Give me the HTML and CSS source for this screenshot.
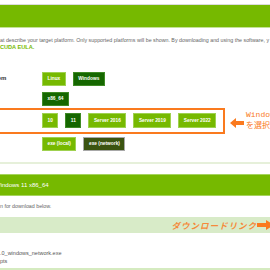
FILE: index.html
```html
<!DOCTYPE html>
<html lang="ja">
<head>
    <meta charset="utf-8">
    <title>CUDA Toolkit Downloads</title>
    <link rel="stylesheet" href="styles.css">
</head>
<body>
    <div class="header"></div>

    <div class="intro">
        <p>at describe your target platform. Only supported platforms will be shown. By downloading and using the software, y</p>
        <p><a href="#" class="eula">CUDA EULA.</a></p>
    </div>

    <div class="platform">
        <div class="row">
            <div class="label">Operating System</div>
            <a href="#" class="btn">Linux</a>
            <a href="#" class="btn active">Windows</a>
        </div>
        <div class="row">
            <div class="label"></div>
            <a href="#" class="btn active">x86_64</a>
        </div>
        <div class="row boxed">
            <div class="label"></div>
            <a href="#" class="btn">10</a>
            <a href="#" class="btn active">11</a>
            <a href="#" class="btn">Server 2016</a>
            <a href="#" class="btn">Server 2019</a>
            <a href="#" class="btn">Server 2022</a>
        </div>
        <div class="row">
            <div class="label"></div>
            <a href="#" class="btn">exe (local)</a>
            <a href="#" class="btn selected">exe (network)</a>
        </div>

        <!-- annotation -->
        <svg class="note-arrow" width="14" height="10" viewBox="0 0 14 10">
            <polygon points="0,5 6,0 6,3 14,3 14,7 6,7 6,10" fill="#fa7a1e"/>
        </svg>
        <div class="note">Windows<br>を選択</div>
    </div>

    <div class="divider"></div>

    <div class="result-bar"><span>Windows 11 x86_64</span></div>

    <p class="note-line">n for download below.</p>

    <div class="band">
        <span class="band-text">ダウンロードリンク</span>
        <svg class="band-arrow" width="17" height="10" viewBox="0 0 17 10">
            <polygon points="0,3 9,3 9,0 17,5 9,10 9,7 0,7" fill="#fa7a1e"/>
        </svg>
    </div>

    <div class="file">
        <p>.0_windows_network.exe</p>
        <p>pts</p>
    </div>

    <div class="bottom-line"></div>
</body>
</html>
```

FILE: styles.css
```css
/* Base */
body {margin: 0; overflow: hidden; font-family: "Liberation Sans", Arial, sans-serif; background: #fff; color: #666;}
p {margin: 0}
a {text-decoration: none}

/* Header */
.header {margin-top: 4px; height: 22px; background: #76b900; border-top: 1px solid #dcdcdc; border-bottom: 1px solid #c4e296;}

/* Intro text */
.intro {margin-top: 9px; font-size: 5.3px; line-height: 7px; white-space: nowrap;}
.eula {color: #76b900; font-weight: bold; font-size: 5.6px;}

/* Platform selector */
.platform {position: relative; margin-top: 21px;}
.row {display: flex; gap: 7px; height: 14px; margin-left: -45px; margin-top: 6px;}
.row:first-child {margin-top: 0}
.label {width: 80px; flex: none; font-size: 6px; font-weight: bold; color: #333; line-height: 12px; white-space: nowrap;}
.btn {display: block; height: 14px; line-height: 12px; padding: 0 4.5px; box-sizing: border-box; background: #76b900; border: 1px solid #9fd150; color: #fff; font-size: 4.8px; font-weight: bold; white-space: nowrap;}
.btn.active {background: #156700; border-color: #3f8a26;}
.btn.selected {background: #3b5411; border: 1px solid #a8a8a8;}

.row.boxed {margin-top: 2px; height: auto; padding: 3px 0 4px 0; border: 2px solid #fa7a1e; width: 272px; box-sizing: border-box; margin-left: -47px;}
.row.boxed .btn {height: 15px; line-height: 13px;}
.row.boxed + .row {margin-top: 3px}

/* Annotation */
.note-arrow {position: absolute; left: 230px; top: 46px;}
.note {position: absolute; left: 246px; top: 37px; color: #fa7a1e; font-family: "Liberation Mono", "Noto Sans CJK JP", monospace; font-size: 8px; line-height: 11px; white-space: nowrap;}

/* Result */
.divider {margin-top: 11px; height: 2px; background: #e6f0da;}
.result-bar {margin-top: 10px; height: 22px; background: #76b900; border-top: 1px solid #a6d45e; border-bottom: 1px solid #a6d45e; box-sizing: border-box; display: flex; align-items: center;}
.result-bar span {margin-left: -5px; color: #fff; font-size: 6px; white-space: nowrap;}

.note-line {margin-top: 6px; font-size: 5.3px; line-height: 8px; white-space: nowrap;}

.band {margin-top: 7px; height: 16px; background: #d8ebc8; display: flex; align-items: center; justify-content: flex-end; overflow: hidden;}
.band-text {color: #f58a3c; font-family: "Noto Sans CJK JP", sans-serif; font-size: 8.5px; font-weight: bold; letter-spacing: 1px; font-style: italic;}
.band-arrow {flex: none; margin-right: -4px}

.file {margin-top: 16px; font-size: 5.5px; line-height: 8px; color: #555; white-space: nowrap;}

.bottom-line {margin-top: 3px; height: 2px; background: #d5ebc0;}
```
